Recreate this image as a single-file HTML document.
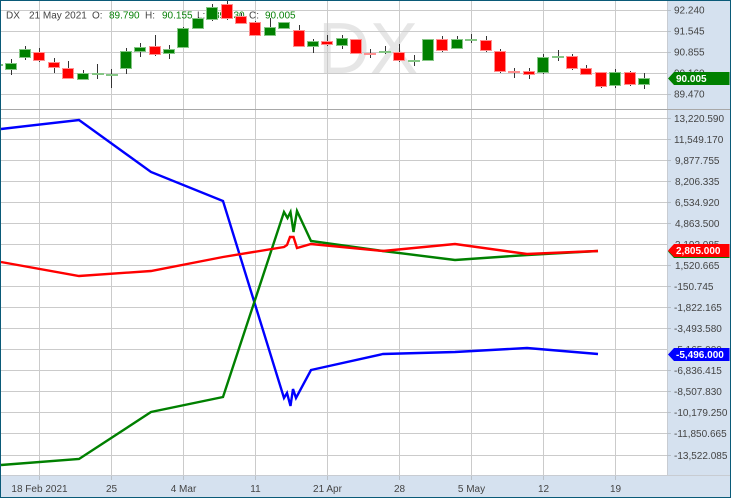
<!DOCTYPE html>
<html><head><meta charset="utf-8">
<style>
html,body{margin:0;padding:0;background:#fff;}
svg{display:block;font-family:"Liberation Sans",sans-serif;}
</style></head>
<body>
<svg width="731" height="498" viewBox="0 0 731 498" xmlns="http://www.w3.org/2000/svg">
<rect width="731" height="498" fill="#fff"/>
<!-- watermark -->
<text x="318" y="73" font-size="72" fill="#e6e6e6">DX</text>
<!-- grid -->
<path stroke="#cbcbcb" stroke-width="1" fill="none" d="M39.5 1V476M111.5 1V476M183.5 1V476M255.5 1V476M327.5 1V476M399.5 1V476M471.5 1V476M543.5 1V476M615.5 1V476
M1 10.5H667M1 31.5H667M1 52.5H667M1 73.5H667M1 94.5H667
M1 118.5H667M1 139.5H667M1 160.5H667M1 181.5H667M1 202.5H667M1 223.5H667M1 244.5H667M1 265.5H667M1 286.5H667M1 307.5H667M1 328.5H667M1 349.5H667M1 370.5H667M1 391.5H667M1 412.5H667M1 433.5H667M1 455.5H667"/>
<!-- axis panels -->
<rect x="667" y="1" width="63" height="475" fill="#d5e1ef"/>
<rect x="1" y="476" width="729" height="21" fill="#d5e1ef"/>
<path stroke="#c8ccd2" fill="none" d="M667.5 1V476M1 475.5H730"/>
<path stroke="#a8a8a8" fill="none" d="M1 109.5H730"/>
<path stroke="#b8c0c8" fill="none" d="M667 10.5h4M667 31.5h4M667 52.5h4M667 94.5h4M667 118.5h4M667 139.5h4M667 160.5h4M667 181.5h4M667 202.5h4M667 223.5h4M667 265.5h4M667 286.5h4M667 307.5h4M667 328.5h4M667 370.5h4M667 391.5h4M667 412.5h4M667 433.5h4M667 455.5h4
M39.5 476v4M111.5 476v4M183.5 476v4M255.5 476v4M327.5 476v4M399.5 476v4M471.5 476v4M543.5 476v4M615.5 476v4"/>
<!-- header -->
<g font-size="10" fill="#444">
<text x="6" y="18.5">DX</text>
<text x="29" y="18.5">21 May 2021</text>
<text x="92" y="18.5">O:</text>
<text x="145" y="18.5">H:</text>
<text x="197" y="18.5">L:</text>
<text x="249" y="18.5">C:</text>
</g>
<g font-size="10" fill="#0a820a">
<text x="109" y="18.5">89.790</text>
<text x="162" y="18.5">90.155</text>
<text x="214" y="18.5">89.630</text>
<text x="265" y="18.5">90.005</text>
</g>
<!-- partial candle at left edge -->
<rect x="1" y="64" width="2" height="2" fill="#80c080"/>
<!-- wicks -->
<path stroke="#333" stroke-width="1" fill="none" d="M11.5 59V75M25.5 46V60M83.5 70V80M97.5 64V79M111.5 69V88M126.5 48V74M140.5 43V57M169.5 45V59M183.5 27V48M198.5 17V29M212.5 4V21M270.5 18V35M313.5 39V53M342.5 35V49M385.5 46V54M414.5 55V66M428.5 39V60M457.5 36V49M471.5 34V43M543.5 54V74M558.5 50V61M615.5 69V88M644.5 73V89
M39.5 48V62M54.5 58V73M68.5 61V79M155.5 35V56M227.5 1V20M241.5 13V24M255.5 21V35M299.5 25V47M327.5 35V46M356.5 39V54M370.5 49V58M399.5 44V62M442.5 36V52M486.5 36V52M500.5 49V73M514.5 68V78M529.5 68V79M572.5 54V70M586.5 65V74M601.5 72V88M630.5 71V86"/>
<!-- green candles -->
<path fill="#008000" stroke="#85c685" stroke-width="1" d="M5.5 63.5h11v6h-11zM19.5 49.5h11v8h-11zM77.5 73.5h11v6h-11zM92.5 73.5h11v1h-11zM106.5 74.5h11v1h-11zM120.5 51.5h11v17h-11zM134.5 47.5h11v4h-11zM163.5 49.5h11v4h-11zM177.5 28.5h11v19h-11zM192.5 18.5h11v10h-11zM206.5 7.5h11v12h-11zM264.5 27.5h11v8h-11zM278.5 22.5h11v6h-11zM307.5 41.5h11v5h-11zM336.5 38.5h11v7h-11zM379.5 51.5h11v1h-11zM408.5 60.5h11v1h-11zM422.5 39.5h11v21h-11zM451.5 39.5h11v9h-11zM465.5 39.5h11v1h-11zM537.5 57.5h11v15h-11zM552.5 56.5h11v1h-11zM609.5 72.5h11v13h-11zM638.5 78.5h11v6h-11z"/>
<!-- red candles -->
<path fill="#ff0000" stroke="#ff8f8f" stroke-width="1" d="M33.5 52.5h11v8h-11zM48.5 62.5h11v5h-11zM62.5 68.5h11v10h-11zM149.5 46.5h11v8h-11zM221.5 4.5h11v14h-11zM235.5 16.5h11v7h-11zM249.5 22.5h11v13h-11zM293.5 30.5h11v16h-11zM321.5 41.5h11v3h-11zM350.5 39.5h11v14h-11zM364.5 53.5h11v1h-11zM393.5 52.5h11v8h-11zM436.5 39.5h11v11h-11zM480.5 40.5h11v10h-11zM494.5 51.5h11v20h-11zM508.5 71.5h11v1h-11zM523.5 71.5h11v3h-11zM566.5 56.5h11v12h-11zM580.5 68.5h11v6h-11zM595.5 72.5h11v14h-11zM624.5 72.5h11v12h-11z"/>
<!-- lines -->
<g fill="none" stroke-width="2.4" stroke-linejoin="miter">
<polyline stroke="#0000ff" points="1,129 79,120 151,172 223,201 284,398 287,393 290.5,406 293,389 296,398 311,370 383,354 455,352 527,348 598,354"/>
<polyline stroke="#008000" points="1,465 79,459 151,412 223,397 284,212 287.5,218 290.5,212 293.5,232 297,211 311,241 383,251 455,260 527,255 598,251"/>
<polyline stroke="#ff0000" points="1,262 79,276 151,271 223,257 284,247 287,245 290,237 293.5,237 297,248 311,244 383,251 455,244 527,254 598,251"/>
</g>
<!-- price labels -->
<g font-size="10" fill="#444">
<text x="674" y="13.5">92.240</text>
<text x="674" y="34.5">91.545</text>
<text x="674" y="55.5">90.855</text>
<text x="674" y="76.5">90.160</text>
<text x="674" y="97.5">89.470</text>
<text x="674" y="122">13,220.590</text>
<text x="674" y="143">11,549.170</text>
<text x="675" y="164">9,877.755</text>
<text x="675" y="185">8,206.335</text>
<text x="675" y="206">6,534.920</text>
<text x="675" y="227">4,863.500</text>
<text x="675" y="248">3,192.085</text>
<text x="675" y="269">1,520.665</text>
<text x="674" y="290">-150.745</text>
<text x="674" y="311">-1,822.165</text>
<text x="674" y="332">-3,493.580</text>
<text x="674" y="353">-5,165.000</text>
<text x="674" y="374">-6,836.415</text>
<text x="674" y="395">-8,507.830</text>
<text x="674" y="416">-10,179.250</text>
<text x="674" y="437">-11,850.665</text>
<text x="674" y="459">-13,522.085</text>
</g>
<!-- date labels -->
<g font-size="10" fill="#444" text-anchor="middle">
<text x="39.5" y="492">18 Feb 2021</text>
<text x="111.5" y="492">25</text>
<text x="183.5" y="492">4 Mar</text>
<text x="255.5" y="492">11</text>
<text x="327.5" y="492">21 Apr</text>
<text x="399.5" y="492">28</text>
<text x="471.5" y="492">5 May</text>
<text x="543.5" y="492">12</text>
<text x="615.5" y="492">19</text>
</g>
<!-- value tags -->
<polygon fill="#008000" points="668,78.5 674,72 729.5,72 729.5,85 674,85"/>
<text x="676" y="82" font-size="10" font-weight="bold" fill="#fff">90.005</text>
<polygon fill="#008000" points="668,251.5 674,245 729.5,245 729.5,258 674,258"/>
<polygon fill="#ff0000" points="668,250.5 674,244 729.5,244 729.5,257 674,257"/>
<text x="676" y="254" font-size="10" font-weight="bold" fill="#fff">2,805.000</text>
<polygon fill="#0000ff" points="668,354.5 674,348 729.5,348 729.5,361 674,361"/>
<text x="676" y="358" font-size="10" font-weight="bold" fill="#fff">-5,496.000</text>
<!-- outer border -->
<path fill="#0a5a78" d="M0 0H731V498H0ZM1 1V497H730V1Z" fill-rule="evenodd"/>
</svg>
</body></html>
